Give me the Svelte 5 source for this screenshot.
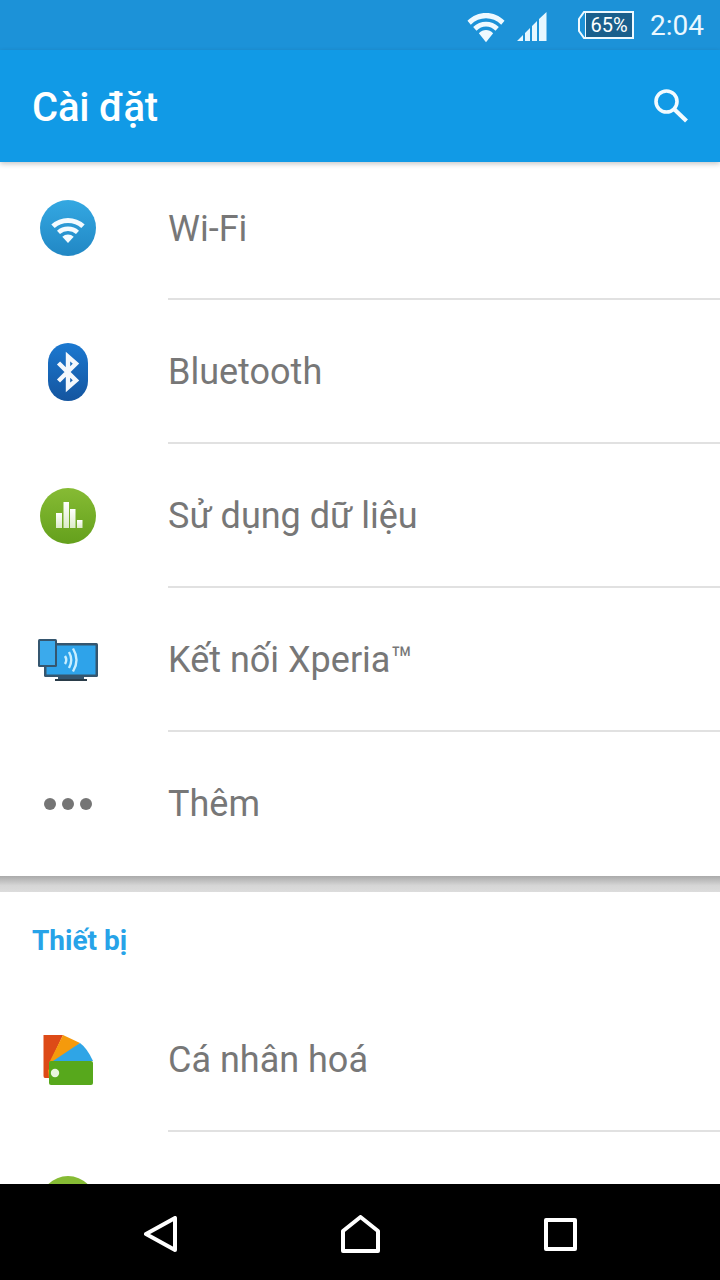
<script>
  const bands = [
    'M0.5 9 C 11 -2, 29 -2, 39.5 9 L 36 13 C 27 4, 13 4, 4 13 Z',
    'M6.5 15.5 C 14 8, 26 8, 33.5 15.5 L 30 19.5 C 24.5 13.5, 15.5 13.5, 10 19.5 Z',
    'M12.5 22 C 17 17.5, 23 17.5, 27.5 22 L 20 31.5 Z'
  ];
  // same fan, drawn on the 60px badge with straight radial ends
  const badgeBands = [
    'M13.3 26.4 A25 25 0 0 1 46.7 26.4 L43.3 30.1 A20 20 0 0 0 16.7 30.1 Z',
    'M19 32.7 A16.5 16.5 0 0 1 41 32.7 L38 36.1 A12 12 0 0 0 22 36.1 Z',
    'M24.3 38.7 A8.5 8.5 0 0 1 35.7 38.7 L30 45 Z'
  ];
</script>

<div class="screen">
  <div class="status">
    <svg class="st-wifi" width="38" height="31" viewBox="0 0 40 32">
      {#each bands as d}
        <path {d} fill="#eef9ff" />
      {/each}
    </svg>
    <svg class="st-signal" width="30" height="30" viewBox="0 0 30 30">
      <path d="M0 29 L6 23 V29 Z M8 21 L13 16 V29 H8 Z M15 14 L20 9 V29 H15 Z M22 7 L29.5 0 V29 H22 Z" fill="#e6f7ff" />
    </svg>
    <div class="battery">
      <svg width="7" height="28" viewBox="0 0 7 28" fill="none" stroke="#eef9ff" stroke-width="2">
        <path d="M7 1 H6 L1 8 V20 L6 27 H7" />
      </svg>
      <span class="level">65%</span>
    </div>
    <span class="time">2:04</span>
  </div>

  <header class="appbar">
    <h1>Cài đặt</h1>
    <svg width="38" height="38" viewBox="0 0 38 38" fill="none" stroke="#f2fbff" stroke-width="3.6">
      <circle cx="14.5" cy="14.5" r="10.5" />
      <path d="M22 22 L34.5 34" stroke-width="4.2" />
    </svg>
  </header>

  <main class="content">
    <section>
      <div class="row first">
        <div class="icon">
          <svg width="60" height="60" viewBox="0 0 60 60">
            <defs>
              <linearGradient id="wifiBg" x1="0" y1="0" x2="0" y2="1">
                <stop offset="0" stop-color="#34a8e2" />
                <stop offset="1" stop-color="#2187c4" />
              </linearGradient>
            </defs>
            <circle cx="30" cy="30" r="28" fill="url(#wifiBg)" />
            {#each badgeBands as d}
              <path {d} fill="#f4fbff" />
            {/each}
          </svg>
        </div>
        <span class="label">Wi-Fi</span>
      </div>

      <div class="row">
        <div class="icon">
          <svg width="60" height="60" viewBox="0 0 60 60">
            <defs>
              <linearGradient id="btBg" x1="0" y1="0" x2="0" y2="1">
                <stop offset="0" stop-color="#1b78d0" />
                <stop offset="1" stop-color="#14559f" />
              </linearGradient>
            </defs>
            <rect x="10" y="1" width="40" height="58" rx="20" fill="url(#btBg)" />
            <path d="M20.5 21 L38 38.5 L30 45.5 V14.5 L38 21.5 L20.5 39" fill="none" stroke="#f4f8fc" stroke-width="4.4" />
          </svg>
        </div>
        <span class="label">Bluetooth</span>
      </div>

      <div class="row">
        <div class="icon">
          <svg width="60" height="60" viewBox="0 0 60 60">
            <defs>
              <linearGradient id="dataBg" x1="0" y1="0" x2="0" y2="1">
                <stop offset="0" stop-color="#86bb34" />
                <stop offset="1" stop-color="#64a01c" />
              </linearGradient>
              <linearGradient id="barFill" x1="0" y1="0" x2="0" y2="1">
                <stop offset="0" stop-color="#ffffff" />
                <stop offset="1" stop-color="#dcebc8" />
              </linearGradient>
            </defs>
            <circle cx="30" cy="30" r="28" fill="url(#dataBg)" />
            <g fill="url(#barFill)">
              <rect x="18" y="27" width="6" height="15" />
              <rect x="25.5" y="16" width="5.5" height="26" />
              <rect x="32" y="23" width="5.5" height="19" />
              <rect x="39" y="34" width="5.5" height="8" />
            </g>
          </svg>
        </div>
        <span class="label">Sử dụng dữ liệu</span>
      </div>

      <div class="row">
        <div class="icon">
          <svg width="60" height="44" viewBox="0 0 60 44">
            <rect x="6" y="5" width="54" height="34" rx="1.5" fill="#35566f" />
            <rect x="8.5" y="7.5" width="49" height="29" fill="#2ea3ea" />
            <path d="M20 39 H46 V41 H20 Z" fill="#35566f" />
            <path d="M17 41 H49 V43 H17 Z" fill="#2a3c49" />
            <rect x="0" y="1" width="19" height="28" rx="1.5" fill="#35566f" />
            <rect x="2" y="3" width="15" height="24" fill="#3baaec" />
            <g fill="none" stroke="#c8eeff" stroke-width="2.4">
              <path d="M27 18 Q29.5 22 27 26" />
              <path d="M31 14 Q35.5 22 31 30" />
              <path d="M35 10.5 Q42 22 35 33.5" />
            </g>
          </svg>
        </div>
        <span class="label">Kết nối Xperia™</span>
      </div>

      <div class="row last">
        <div class="icon dots">
          <span></span><span></span><span></span>
        </div>
        <span class="label">Thêm</span>
      </div>
    </section>

    <div class="gap"></div>

    <section>
      <h2>Thiết bị</h2>
      <div class="row personal">
        <div class="icon">
          <svg width="52" height="52" viewBox="0 0 52 52">
            <path d="M1.5 1 H21 L8 29 L9 44 H3 Q1.5 44 1.5 42 Z" fill="#dd4a17" />
            <path d="M21 1 L38 9 L10 33 L7 29 Z" fill="#f59a0c" />
            <path d="M38 9 Q45 14 51 27 H11 Z" fill="#2fa5e6" />
            <path d="M6 35 L11 42 L7 45 Z" fill="#f59a0c" />
            <rect x="7" y="27" width="44" height="24" rx="2" fill="#57a81c" />
            <circle cx="13" cy="39" r="4.2" fill="#e8f5de" />
          </svg>
        </div>
        <span class="label">Cá nhân hoá</span>
      </div>
      <div class="row peek">
        <div class="icon">
          <svg width="60" height="60" viewBox="0 0 60 60">
            <circle cx="30" cy="30" r="28" fill="#86bb34" />
          </svg>
        </div>
      </div>
    </section>
  </main>

  <nav class="navbar">
    <span class="key">
      <svg width="33" height="36" viewBox="0 0 33 36" fill="none" stroke="#fff" stroke-width="4" stroke-linejoin="round">
        <path d="M31 2 V34 L2 18 Z" />
      </svg>
    </span>
    <span class="key">
      <svg width="39" height="38" viewBox="0 0 39 38" fill="none" stroke="#fff" stroke-width="4" stroke-linejoin="round">
        <path d="M2 36 V16 L19.5 2 L37 16 V36 Z" />
      </svg>
    </span>
    <span class="key">
      <svg width="33" height="33" viewBox="0 0 33 33" fill="none" stroke="#fff" stroke-width="4" stroke-linejoin="round">
        <rect x="2" y="2" width="29" height="29" />
      </svg>
    </span>
  </nav>
</div>

<style>
  :global(body) {
    margin: 0;
    background: #fff;
  }

  .screen {
    width: 720px;
    height: 1280px;
    display: flex;
    flex-direction: column;
    overflow: hidden;
    font-family: Roboto, "Noto Sans", sans-serif;
  }

  .status {
    height: 50px;
    flex: none;
    display: flex;
    align-items: center;
    justify-content: flex-end;
    padding-right: 16px;
    background: #1c92d8;
    color: #eaf8ff;
  }

  .st-wifi {
    margin-right: 12px;
    margin-top: 5px;
  }

  .st-signal {
    margin-right: 31px;
    margin-top: 3px;
  }

  .battery {
    display: flex;
    align-items: center;
    margin-right: 16px;
  }

  .level {
    width: 46px;
    height: 24px;
    line-height: 24px;
    text-align: center;
    font-size: 20px;
    color: #fff;
    background: #1a5f8c;
    border: 2px solid #eef9ff;
    border-left: 1px solid #eef9ff;
  }

  .time {
    font-size: 28px;
    line-height: 50px;
    margin-top: 2px;
  }

  .appbar {
    height: 112px;
    flex: none;
    display: flex;
    align-items: center;
    justify-content: space-between;
    padding: 0 30px 0 32px;
    background: #119ae6;
    box-shadow: 0 2px 5px rgba(0, 0, 0, 0.22);
    position: relative;
    z-index: 1;
  }

  .appbar h1 {
    margin: 2px 0 0;
    font-size: 40px;
    font-weight: 500;
    letter-spacing: -0.2px;
    color: #fff;
  }

  .content {
    flex: 1;
    min-height: 0;
    overflow: hidden;
  }

  .row {
    height: 144px;
    box-sizing: border-box;
    display: flex;
    align-items: center;
    position: relative;
  }

  .row.first {
    height: 138px;
    padding-bottom: 6px;
  }

  .row::after {
    content: "";
    position: absolute;
    left: 168px;
    right: 0;
    bottom: 0;
    height: 2px;
    background: #e1e1e1;
  }

  .row.last::after,
  .row.peek::after {
    display: none;
  }

  .icon {
    width: 136px;
    flex: none;
    display: flex;
    align-items: center;
    justify-content: center;
  }

  .label {
    margin-left: 32px;
    font-size: 36px;
    color: #777;
    white-space: nowrap;
  }

  .first .label {
    margin-top: 2px;
  }

  .dots {
    gap: 6px;
  }

  .dots span {
    width: 12px;
    height: 12px;
    border-radius: 50%;
    background: #757575;
  }

  .gap {
    height: 16px;
    background: linear-gradient(#aaa, #d6d6d6 60%, #dcdcdc);
  }

  h2 {
    margin: 0;
    height: 96px;
    line-height: 98px;
    padding-left: 32px;
    font-size: 28px;
    font-weight: 700;
    color: #27a3e8;
  }

  .row.peek {
    align-items: flex-start;
    padding-top: 42px;
  }

  .navbar {
    height: 96px;
    flex: none;
    display: flex;
    justify-content: center;
    align-items: center;
    background: #000;
  }

  .key {
    width: 200px;
    display: flex;
    justify-content: center;
    align-items: center;
    padding-top: 4px;
  }
</style>
